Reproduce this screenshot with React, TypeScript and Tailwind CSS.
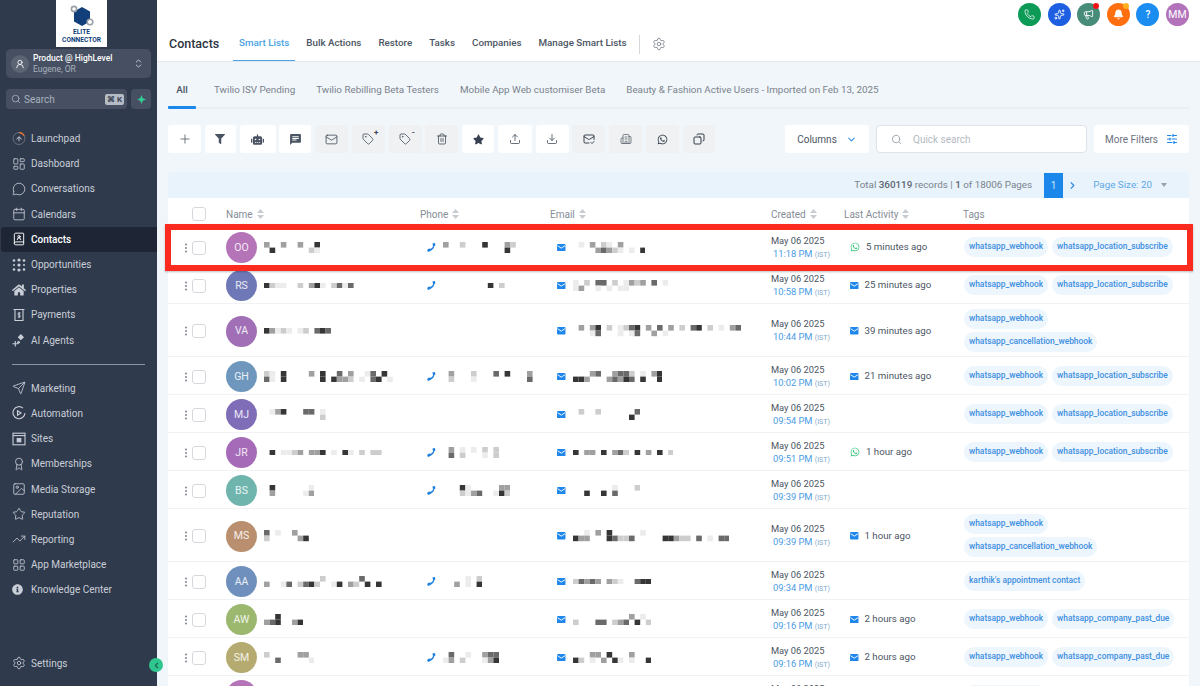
import React from "react";
import {
  BookUser, Calendar, ChevronDown, ChevronRight, ChevronsUpDown, Copy, Download, Image, LayoutDashboard, LayoutGrid,
  MailCheck, Building2, Mail, MessageCircle, Plus, Search, Send, Settings, SlidersHorizontal, Star, Tag, Trash2, TrendingUp, Upload,
  Award, Phone, Sparkles, Megaphone, Bell, UserRound, EllipsisVertical,
} from "lucide-react";
import { FaFilter, FaHome, FaInfoCircle, FaRobot, FaStar, FaWhatsapp } from "react-icons/fa";
import { MdChat } from "react-icons/md";

const SHADES: Record<string, string> = { "1": "#ececec", "2": "#cdcdcd", "3": "#a0a0a0", "4": "#6a6a6a", "5": "#363636" };

// censored text in the screenshot, one char per block
const Mosaic = ({ lines }: { lines: string[] }) => {
  const size = 5.6;
  const w = Math.max(...lines.map((l) => l.length)) * size;
  return (
    <svg width={w} height={lines.length * size} className="block shrink-0">
      {lines.map((line, y) =>
        line.split("").map((c, x) =>
          SHADES[c] ? <rect key={`${x}-${y}`} x={x * size} y={y * size} width={size} height={size} fill={SHADES[c]} /> : null
        )
      )}
    </svg>
  );
};

const LaunchpadIcon = () => (
  <svg width="15" height="15" viewBox="0 0 16 16" fill="none" stroke="#c9ced8" strokeWidth="1.1">
    <circle cx="8" cy="8" r="6.8" stroke="#6b7482" />
    <path d="M8 1.2a6.8 6.8 0 0 1 6 3.6" stroke="#e8743b" strokeWidth="1.4" />
    <path d="M5 9l3-3 3 3M8 6v5" />
  </svg>
);
const OpportunitiesIcon = () => (
  <svg width="14" height="14" viewBox="0 0 14 14" fill="#c9ced8">
    <circle cx="2" cy="2.5" r="1.3" /><circle cx="7" cy="2" r="1.6" /><circle cx="12" cy="2.5" r="1.3" />
    <circle cx="2" cy="7" r="1" /><circle cx="7" cy="7" r="1.6" /><circle cx="12" cy="7" r="1" />
    <circle cx="2" cy="11.5" r="1.3" /><circle cx="7" cy="12" r="1.6" /><circle cx="12" cy="11.5" r="1.3" />
  </svg>
);
const PaymentsIcon = () => (
  <svg width="14" height="14" viewBox="0 0 14 14" fill="none" stroke="#c9ced8" strokeWidth="1.1">
    <path d="M1.5 1.5h11M3 1.5v11h8v-11" />
    <path d="M8.6 5H6.2v2h1.8v2H5.6M7.2 4v6.2" strokeWidth="0.9" />
  </svg>
);
const AgentsIcon = () => (
  <svg width="15" height="15" viewBox="0 0 15 15" fill="none" stroke="#c9ced8" strokeWidth="1.2">
    <path d="M9.5 1.5l2.5 2.5-2.5 2.5L7 4z" fill="#c9ced8" />
    <path d="M3.5 8v6M0.5 11h6" />
    <path d="M7 8.5l1 1-1 1-1-1z" fill="#c9ced8" />
  </svg>
);
const AutomationIcon = () => (
  <svg width="14" height="14" viewBox="0 0 14 14" fill="none" stroke="#c9ced8" strokeWidth="1.1">
    <path d="M11 2.2A6 6 0 1 0 13 7" />
    <path d="M5.5 4.8L9 7l-3.5 2.2z" />
  </svg>
);
const SitesIcon = () => (
  <svg width="14" height="14" viewBox="0 0 14 14" fill="none" stroke="#c9ced8" strokeWidth="1.1">
    <rect x="1" y="1.2" width="12" height="11.6" />
    <path d="M1 3.6h12" />
    <rect x="5.2" y="6.6" width="3.6" height="3.2" fill="#c9ced8" />
  </svg>
);
const LogoMark = () => (
  <svg width="26" height="26" viewBox="0 0 26 26">
    <path d="M13 3l8 4.5v10L13 22l-8-4.5v-10z" fill="#123f7a" />
    <circle cx="5" cy="5" r="2.6" fill="#fff" stroke="#9aa0a8" strokeWidth="1.6" />
    <circle cx="21" cy="18" r="2.8" fill="#fff" stroke="#9aa0a8" strokeWidth="1.6" />
  </svg>
);

const navTop: [string, React.ReactNode][] = [
  ["Launchpad", <LaunchpadIcon />],
  ["Dashboard", <LayoutDashboard size={14} strokeWidth={1.4} />],
  ["Conversations", <MessageCircle size={14} strokeWidth={1.4} />],
  ["Calendars", <Calendar size={14} strokeWidth={1.4} />],
  ["Contacts", <BookUser size={14} strokeWidth={1.6} />],
  ["Opportunities", <OpportunitiesIcon />],
  ["Properties", <FaHome size={14} />],
  ["Payments", <PaymentsIcon />],
  ["AI Agents", <AgentsIcon />],
];
const navBottom: [string, React.ReactNode][] = [
  ["Marketing", <Send size={14} strokeWidth={1.4} />],
  ["Automation", <AutomationIcon />],
  ["Sites", <SitesIcon />],
  ["Memberships", <Award size={14} strokeWidth={1.4} />],
  ["Media Storage", <Image size={14} strokeWidth={1.4} />],
  ["Reputation", <Star size={14} strokeWidth={1.4} />],
  ["Reporting", <TrendingUp size={14} strokeWidth={1.4} />],
  ["App Marketplace", <LayoutGrid size={14} strokeWidth={1.4} />],
  ["Knowledge Center", <FaInfoCircle size={11} className="mr-[3px]" />],
];

const NavItem = ({ label, icon }: { label: string; icon: React.ReactNode }) => {
  const active = label === "Contacts";
  return (
    <div className={`flex h-[25.2px] items-center gap-[5px] text-[10px] ${active ? "ml-[1px] rounded-l-[3px] bg-[#1e2636] pl-[11px] font-medium text-white" : "pl-[12px] text-[#c9ced8]"}`}>
      <span className={`flex w-[14px] justify-center ${active ? "text-white" : "text-[#c9ced8]"}`}>{icon}</span>
      {label}
    </div>
  );
};

const Sidebar = () => (
  <aside className="relative flex w-[157px] shrink-0 flex-col bg-[#2f3a4c]">
    <div className="ml-[56px] flex h-[47px] w-[51px] flex-col items-center bg-white pt-[4px]">
      <LogoMark />
      <div className="mt-[-1px] text-center text-[6.6px] font-bold leading-[7.5px] text-[#123f7a]">ELITE<br />CONNECTOR</div>
    </div>
    <div className="mx-[6px] mt-[2px] flex h-[29px] items-center rounded-[5px] bg-[#465062] pl-[5px] pr-[7px]">
      <span className="flex h-[18px] w-[18px] items-center justify-center rounded-full bg-[#5b6473] text-white"><UserRound size={10} /></span>
      <div className="ml-[4px] flex-1 leading-[10px]">
        <div className="text-[8.5px] font-medium text-white">Product @ HighLevel</div>
        <div className="mt-[1px] text-[8.5px] text-[#a9b0bc]">Eugene, OR</div>
      </div>
      <ChevronsUpDown size={11} className="text-[#c9ced8]" />
    </div>
    <div className="mx-[6px] mt-[11px] flex gap-[4px]">
      <div className="flex h-[20px] w-[122px] items-center rounded-[4px] bg-[#465062] pl-[5px] pr-[3px] text-[10px] text-[#a9b0bc]">
        <Search size={10} />
        <span className="ml-[3px] flex-1">Search</span>
        <span className="rounded-[2px] bg-[#b6bcc6] px-[2px] text-[8px] font-bold leading-[11px] text-[#3a4454]">⌘ K</span>
      </div>
      <div className="flex h-[20px] w-[20px] items-center justify-center rounded-[4px] bg-[#465062]">
        <svg width="9" height="9" viewBox="0 0 10 10" fill="#2fcf95"><path d="M5 0l1.4 3.6L10 5 6.4 6.4 5 10 3.6 6.4 0 5l3.6-1.4z" /></svg>
      </div>
    </div>
    <nav className="mt-[17px]">
      {navTop.map(([label, icon]) => <NavItem key={label} label={label} icon={icon} />)}
    </nav>
    <div className="mx-[12px] my-[11px] h-px bg-[#8d95a3]" />
    <nav>
      {navBottom.map(([label, icon]) => <NavItem key={label} label={label} icon={icon} />)}
    </nav>
    <div className="mt-auto mb-[10px]">
      <NavItem label="Settings" icon={<Settings size={14} strokeWidth={1.4} />} />
    </div>
    <span className="absolute right-[-6px] bottom-[14px] z-10 flex h-[14px] w-[14px] items-center justify-center rounded-full bg-[#2fc58f] text-[#1d5f4a]">
      <ChevronRight size={9} className="rotate-180" strokeWidth={3} />
    </span>
  </aside>
);

const Circle = ({ bg, dot, children }: { bg: string; dot?: string; children: React.ReactNode }) => (
  <span className={`relative flex h-[23px] w-[23px] items-center justify-center rounded-full text-white ${bg}`}>
    {children}
    {dot && <span className={`absolute top-0 right-[1px] h-[6px] w-[6px] rounded-full ${dot}`} />}
  </span>
);

const TopBar = () => (
  <div className="flex h-[24px] items-start justify-end gap-[6.6px] pt-[3px] pr-[11px]">
    <Circle bg="bg-[#0c9a57]"><Phone size={11} strokeWidth={1.6} /></Circle>
    <Circle bg="bg-[#1d5fe0]"><Sparkles size={11} /></Circle>
    <Circle bg="bg-[#468c78]" dot="bg-[#f01414]"><Megaphone size={11} /></Circle>
    <Circle bg="bg-[#ff6f0f]" dot="bg-[#ffb020]"><Bell size={11} fill="#fff" /></Circle>
    <Circle bg="bg-[#1b8cf0]"><span className="text-[10px] font-medium">?</span></Circle>
    <Circle bg="bg-[#b273bb]"><span className="text-[10.5px]">MM</span></Circle>
  </div>
);

const Header = () => (
  <header className="h-[62px] shrink-0 border-b border-[#e3e6ea] bg-white">
    <TopBar />
    <div className="flex h-[37px] items-end pl-[12px]">
      <span className="mb-[7px] w-[59px] text-[12.5px] font-medium text-[#2c3440]">Contacts</span>
      <div className="mb-[10px] flex items-center gap-[17px] text-[9.8px] font-medium text-[#4b5563]">
        <span className="relative ml-[11px] text-[#4ba3e3]">
          Smart Lists
          <span className="absolute -bottom-[10px] -left-[6px] -right-[6px] h-[1.5px] bg-[#4ba3e3]" />
        </span>
        <span>Bulk Actions</span>
        <span>Restore</span>
        <span>Tasks</span>
        <span>Companies</span>
        <span>Manage Smart Lists</span>
      </div>
      <span className="mb-[7px] ml-[12px] h-[19px] w-px bg-[#d4d8dd]" />
      <Settings size={14} strokeWidth={1.3} className="mb-[10px] ml-[12px] text-[#6b7280]" />
    </div>
  </header>
);

const subTabs = ["Twilio ISV Pending", "Twilio Rebilling Beta Testers", "Mobile App Web customiser Beta", "Beauty & Fashion Active Users - Imported on Feb 13, 2025"];

const SubTabs = () => (
  <div className="flex h-[47px] shrink-0 items-center border-b-2 border-[#e9eef2] pt-[11px] text-[9.85px] text-[#7b828c]">
    <span className="relative mr-[18px] flex h-full w-[28px] items-center justify-center font-medium text-[#4b5563]">
      All
      <span className="absolute -bottom-[2px] left-0 right-0 h-[3px] rounded-[1px] bg-[#1b87ea]" />
    </span>
    <div className="flex gap-[21px]">
      {subTabs.map((t) => <span key={t}>{t}</span>)}
    </div>
  </div>
);

const TagPlus = ({ sign }: { sign: string }) => (
  <span className="relative flex">
    <Tag size={12} strokeWidth={1.5} />
    <span className="absolute -top-[5px] -right-[4px] text-[8px] font-bold leading-[10px]">{sign}</span>
  </span>
);

const tools: [string, React.ReactNode, boolean][] = [
  ["w-[33px]", <Plus size={14} strokeWidth={1.5} className="text-[#5b6470]" />, false],
  ["w-[31px]", <FaFilter size={10} className="text-[#4a5463]" />, false],
  ["w-[36px]", <FaRobot size={13} className="text-[#4a5463]" />, false],
  ["w-[32px]", <MdChat size={13} className="text-[#4a5463]" />, false],
  ["w-[33px]", <Mail size={13} strokeWidth={1.4} className="text-[#374151]" />, true],
  ["w-[33px]", <TagPlus sign="+" />, true],
  ["w-[33px]", <TagPlus sign="-" />, true],
  ["w-[33px]", <Trash2 size={12} strokeWidth={1.5} className="text-[#374151]" />, true],
  ["w-[32px]", <FaStar size={11} className="text-[#374151]" />, false],
  ["w-[34px]", <Upload size={12} strokeWidth={1.5} className="text-[#374151]" />, false],
  ["w-[33px]", <Download size={12} strokeWidth={1.5} className="text-[#374151]" />, false],
  ["w-[33px]", <MailCheck size={12} strokeWidth={1.7} className="text-[#1f2937]" />, true],
  ["w-[33px]", <Building2 size={12} strokeWidth={1.4} className="text-[#4a5463]" />, true],
  ["w-[33px]", <FaWhatsapp size={11} className="text-[#374151]" />, true],
  ["w-[32px]", <Copy size={12} strokeWidth={1.8} className="text-[#1f2937] -scale-x-100" />, true],
];

const Toolbar = () => (
  <div className="mt-[16px] flex h-[28px] shrink-0 items-center">
    <div className="flex gap-[3.75px]">
      {tools.map(([w, icon, gray], i) => (
        <span key={i} className={`flex h-[28px] items-center justify-center rounded-[3px] ${w} ${gray ? "bg-[#eff1f2]" : "bg-white"} text-[#374151]`}>{icon}</span>
      ))}
    </div>
    <div className="ml-auto flex items-center gap-[7px]">
      <span className="flex h-[28px] w-[84px] items-center justify-center gap-[9px] rounded-[3px] bg-white text-[10px] text-[#4b5563]">
        Columns <ChevronDown size={11} strokeWidth={2.2} className="text-[#2f8be0]" />
      </span>
      <span className="flex h-[28px] w-[211px] items-center rounded-[4px] border border-[#dfe3e8] bg-white pl-[14px] text-[10px] text-[#b4bac2]">
        <Search size={11} className="mr-[11px] text-[#9aa1aa]" />Quick search
      </span>
      <span className="flex h-[28px] w-[95px] items-center justify-center gap-[8px] rounded-[3px] bg-white text-[10px] text-[#6b7280]">
        More Filters <SlidersHorizontal size={12} strokeWidth={2.4} className="text-[#1b87ea]" />
      </span>
    </div>
  </div>
);

const Pagination = () => (
  <div className="mt-[19px] flex h-[26px] shrink-0 items-center rounded-t-[3px] bg-[#e8f3fc] pr-[22px] text-[9.85px] text-[#7b828c]">
    <span className="ml-auto">Total <b className="font-medium text-[#5e6671]">360119</b> records | <b className="font-medium text-[#5e6671]">1</b> of 18006 Pages</span>
    <span className="ml-[12px] flex h-[25px] w-[19px] items-center justify-center bg-[#1b87ea] text-[10px] text-[#cfe6fb]">1</span>
    <ChevronRight size={11} strokeWidth={2.5} className="ml-[4px] text-[#2f8be0]" />
    <span className="ml-[15px] text-[#5fa8e6]">Page Size: 20</span>
    <span className="ml-[9px] h-0 w-0 border-x-[3.5px] border-t-[4px] border-x-transparent border-t-[#9aa1aa]" />
  </div>
);

const Sort = () => (
  <svg width="9" height="12" viewBox="0 0 9 12" fill="#c8ccd2" className="ml-[3px]"><path d="M4.5 1L8 5H1zM4.5 11L8 7H1z" /></svg>
);

const PhoneMark = () => (
  <svg width="9" height="9" viewBox="0 0 9 9" fill="none" className="shrink-0">
    <path d="M6.6 1c.7 3-.8 5.6-5 6.4" stroke="#1f7fdc" strokeWidth="1.4" />
    <path d="M5.4.4L8 0l.4 2.6-2.2.8zM.8 6l2.4-.4.8 2L1.4 9 .2 8z" fill="#1f7fdc" />
  </svg>
);
const MailMark = () => (
  <svg width="8.5" height="7.5" viewBox="0 0 9 8" className="shrink-0"><rect width="9" height="8" rx="1" fill="#1f87ec" /><path d="M.5 1.8l4 2.6 4-2.6" stroke="#fff" strokeWidth="1" fill="none" /></svg>
);

type Row = {
  init: string; color: string; name: string[]; phone?: string[]; email: string[];
  time: string; act?: string; wa?: boolean; tags: string[]; tall?: boolean;
};

const LOC = "whatsapp_location_subscribe";
const HOOK = "whatsapp_webhook";
const rows: Row[] = [
  { init: "OO", color: "bg-[#b573b8]", name: ["3..3..3..5", ".5......21"], phone: ["3..2...5...32", "...........5"], email: [".1.3.21.3", "....34321.1.5"], time: "11:18 PM", act: "5 minutes ago", wa: true, tags: [HOOK, LOC] },
  { init: "RS", color: "bg-[#6f78b6]", name: ["5211..2.351.2414"], phone: ["........5.2"], email: ["1.2.44.2.1323.4.1", "13..1.1.11"], time: "10:58 PM", act: "25 minutes ago", tags: [HOOK, LOC] },
  { init: "VA", color: "bg-[#a06fb6]", name: ["53121.12.454"], email: [".3.35.2.1245.3.4.3.2.45.2.1.34", "...14...1.14..3.1"], time: "10:44 PM", act: "39 minutes ago", tags: [HOOK, "whatsapp_cancellation_webhook"], tall: true },
  { init: "GH", color: "bg-[#6f97bd]", name: ["21.5....3.5..4.3..14.5", "41.5......5.5332.1.45.1"], phone: [".3...2...4.5...3", ".2...1.........4"], email: ["...34..3442.1.35", "553...34354.5..5"], time: "10:02 PM", act: "21 minutes ago", tags: [HOOK, LOC] },
  { init: "MJ", color: "bg-[#7f6db8]", name: [".135...44.1", "..........2"], email: [".2..2......4", "..........5"], time: "09:54 PM", tags: [HOOK, LOC] },
  { init: "JR", color: "bg-[#a66bb8]", name: [".5.1123.335.1.51.2.22"], phone: [".3.1.1.2.2", ".4.2...1.2"], email: ["5.33.5.342.5.3.5.2"], time: "09:51 PM", act: "1 hour ago", wa: true, tags: [HOOK, LOC] },
  { init: "BS", color: "bg-[#6fb5ae]", name: [".5......1", ".3.....13"], phone: ["...51.....33", "...2134..152"], email: [".......1...2", "..5..5.4"], time: "09:39 PM", tags: [] },
  { init: "MS", color: "bg-[#b98f6f]", name: ["4.1..3", "2.....35"], email: ["..1.3.5.....1", "533...54224.....55322.4.1.44"], time: "09:39 PM", act: "1 hour ago", tags: [HOOK, "whatsapp_cancellation_webhook"], tall: true },
  { init: "AA", color: "bg-[#6f90bd]", name: ["..........2......4", "3..14.2452..15.32.5.5"], phone: ["....1.2", "..3.1.5"], email: ["24343.321..455"], time: "09:34 PM", tags: ["karthik's appointment contact"] },
  { init: "AW", color: "bg-[#9cb86f]", name: ["..5", "345..35"], email: ["..........3.1", "2...44.234.5.2"], time: "09:16 PM", act: "2 hours ago", tags: [HOOK, "whatsapp_company_past_due"] },
  { init: "SM", color: "bg-[#b5aa6f]", name: ["2.....33", "..4.....1"], phone: [".4..1..344", "13.2...135"], email: ["...33.5...3", "52.1.3.51.1..5"], time: "09:16 PM", act: "2 hours ago", tags: [HOOK, "whatsapp_company_past_due"] },
  { init: "OO", color: "bg-[#b573b8]", name: [], email: [], time: "09:04 PM", tags: [HOOK] },
];

const ContactRow = ({ row }: { row: Row }) => (
  <div className={`flex shrink-0 items-center border-b border-[#f0f2f5] pt-[2px] ${row.tall ? "h-[53px]" : "h-[38px]"}`}>
    <EllipsisVertical size={12} strokeWidth={2.4} className="ml-[12px] text-[#8a9099]" />
    <span className="h-[14px] w-[14px] rounded-[3px] border border-[#d5d9de] bg-white" />
    <div className="ml-[20px] flex w-[194px] items-center gap-[7px] overflow-hidden">
      <span className={`flex h-[31px] w-[31px] shrink-0 items-center justify-center rounded-full text-[10.5px] text-white/85 ${row.color}`}>{row.init}</span>
      <Mosaic lines={row.name} />
    </div>
    <div className="flex w-[130px] items-center gap-[7px] overflow-hidden pl-[7px]">
      {row.phone && <PhoneMark />}
      {row.phone && <Mosaic lines={row.phone} />}
    </div>
    <div className="flex w-[221px] items-center gap-[7px] overflow-hidden pl-[7px]">
      {row.name.length > 0 && <MailMark />}
      <Mosaic lines={row.email} />
    </div>
    <div className="w-[79px] leading-[13px]">
      <div className="text-[9.3px] text-[#4b5563]">May 06 2025</div>
      <div className="pl-[2px] text-[9.3px] text-[#4a9be6]">{row.time} <span className="text-[7px] text-[#7fa9cc]">(IST)</span></div>
    </div>
    <div className="flex w-[114px] items-center gap-[6px] text-[9.7px] text-[#4b5563]">
      {row.act && (row.wa ? <FaWhatsapp size={10} className="text-[#35c77b]" /> : <MailMark />)}
      {row.act}
    </div>
    <div className={`-mt-[2px] flex w-[225px] gap-x-[4px] gap-y-[3px] ${row.tall ? "flex-col items-start" : "items-center"}`}>
      {row.tags.map((t) => (
        <span key={t} className="flex h-[20px] items-center rounded-full bg-[#edf5fd] px-[5px] text-[8.4px] font-medium text-[#3d8fe0]">{t}</span>
      ))}
    </div>
  </div>
);

const TableHead = () => (
  <div className="flex h-[30px] shrink-0 items-center pt-[2px] text-[10px] text-[#868d97]">
    <span className="ml-[24px] h-[14px] w-[14px] rounded-[3px] border border-[#d5d9de]" />
    <span className="ml-[20px] flex w-[194px] items-center">Name<Sort /></span>
    <span className="flex w-[130px] items-center">Phone<Sort /></span>
    <span className="flex w-[221px] items-center">Email<Sort /></span>
    <span className="flex w-[73px] items-center">Created<Sort /></span>
    <span className="flex w-[119px] items-center">Last Activity<Sort /></span>
    <span>Tags</span>
  </div>
);

export default function App() {
  return (
    <div className="relative flex h-[686px] w-[1200px] overflow-hidden bg-white font-['Roboto',sans-serif]">
      <Sidebar />
      <main className="flex min-w-0 flex-1 flex-col bg-[#f0f6fa]">
        <Header />
        <div className="flex min-h-0 flex-1 flex-col pl-[11px] pr-[11px]">
          <SubTabs />
          <Toolbar />
          <Pagination />
          <div className="flex min-h-0 flex-1 flex-col overflow-hidden bg-white">
            <TableHead />
            {rows.map((r, i) => <ContactRow key={i} row={r} />)}
          </div>
        </div>
      </main>
      {/* red highlight around the first contact */}
      <div className="absolute top-[224px] left-[165px] h-[47px] w-[1028px] border-[6.5px] border-[#fb2b1f] shadow-[0_1px_2px_rgba(0,0,0,0.25)]" />
    </div>
  );
}
